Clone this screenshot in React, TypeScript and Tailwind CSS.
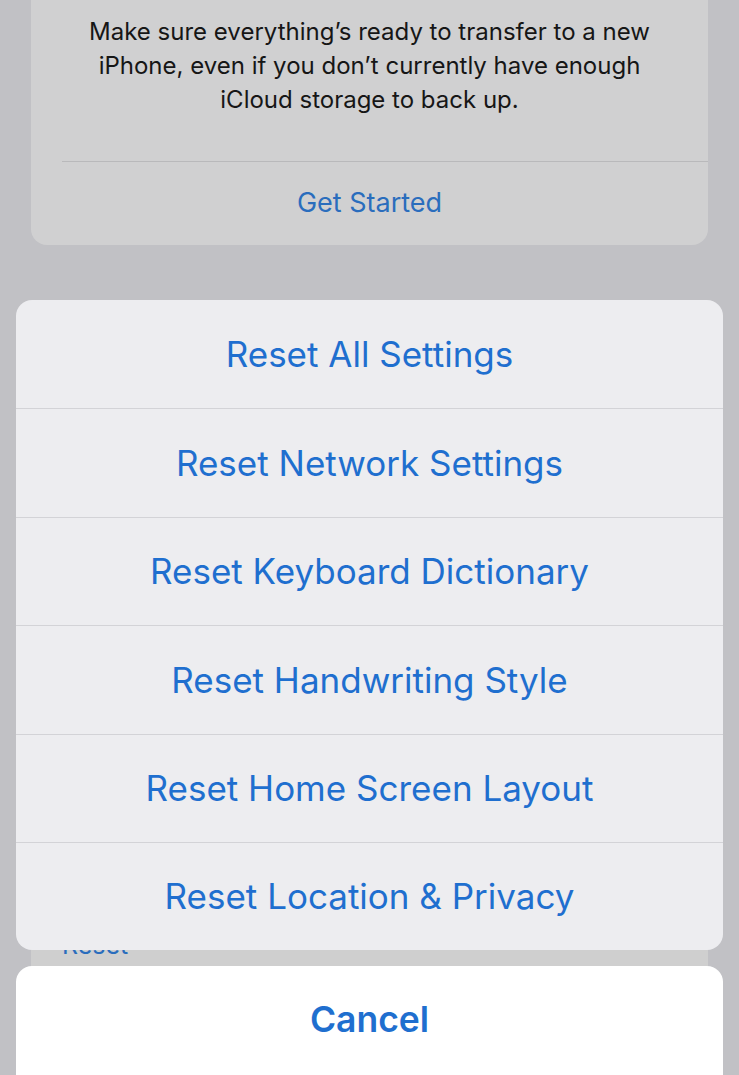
const sheetItems = [
  "Reset All Settings",
  "Reset Network Settings",
  "Reset Keyboard Dictionary",
  "Reset Handwriting Style",
  "Reset Home Screen Layout",
  "Reset Location & Privacy",
]

export default function App() {
  return (
    <div
      className="relative h-[1075px] w-full overflow-hidden bg-[#c1c1c5]"
      style={{ fontFamily: "Inter, 'Liberation Sans', sans-serif" }}
    >
      {/* dimmed page behind the sheet */}
      <div className="mx-[31px] -mt-[20px] rounded-[16px] bg-[#d0d0d1]">
        <p className="px-[48px] pt-[35px] text-center text-[24px] leading-[34px] text-[#161616]">
          Make sure everything’s ready to transfer to a new iPhone, even if you don’t currently have enough iCloud storage to back up.
        </p>
        <div className="mt-[44px] ml-[31px] h-px bg-[#b9b9bb]" />
        <div className="flex h-[83px] items-center justify-center text-[27px] text-[#2a6dbd]">Get Started</div>
      </div>

      <div className="mx-[31px] mt-[60px] h-[800px] rounded-[16px] bg-[#cfcfcf] pl-[31px] pt-[626px]">
        <span className="text-[25px] leading-[28px] text-[#2a6dbd]">Reset</span>
      </div>

      {/* action sheet */}
      <div className="absolute left-[16px] right-[16px] top-[300px] overflow-hidden rounded-[16px] bg-[#ededf0]">
        {sheetItems.map((item, i) => (
          <div
            key={item}
            className={
              i === 0
                ? "flex h-[108.4px] items-center justify-center text-[35px] text-[#1f6fcf]"
                : "flex h-[108.4px] items-center justify-center border-t border-[#d3d3d7] text-[35px] text-[#1f6fcf]"
            }
          >
            {item}
          </div>
        ))}
      </div>

      <div className="absolute left-[16px] right-[16px] top-[966px] flex h-[130px] justify-center rounded-[16px] bg-white pt-[30px]">
        <span className="text-[35.5px] font-semibold leading-[48px] text-[#1f6fcf]">Cancel</span>
      </div>
    </div>
  )
}
